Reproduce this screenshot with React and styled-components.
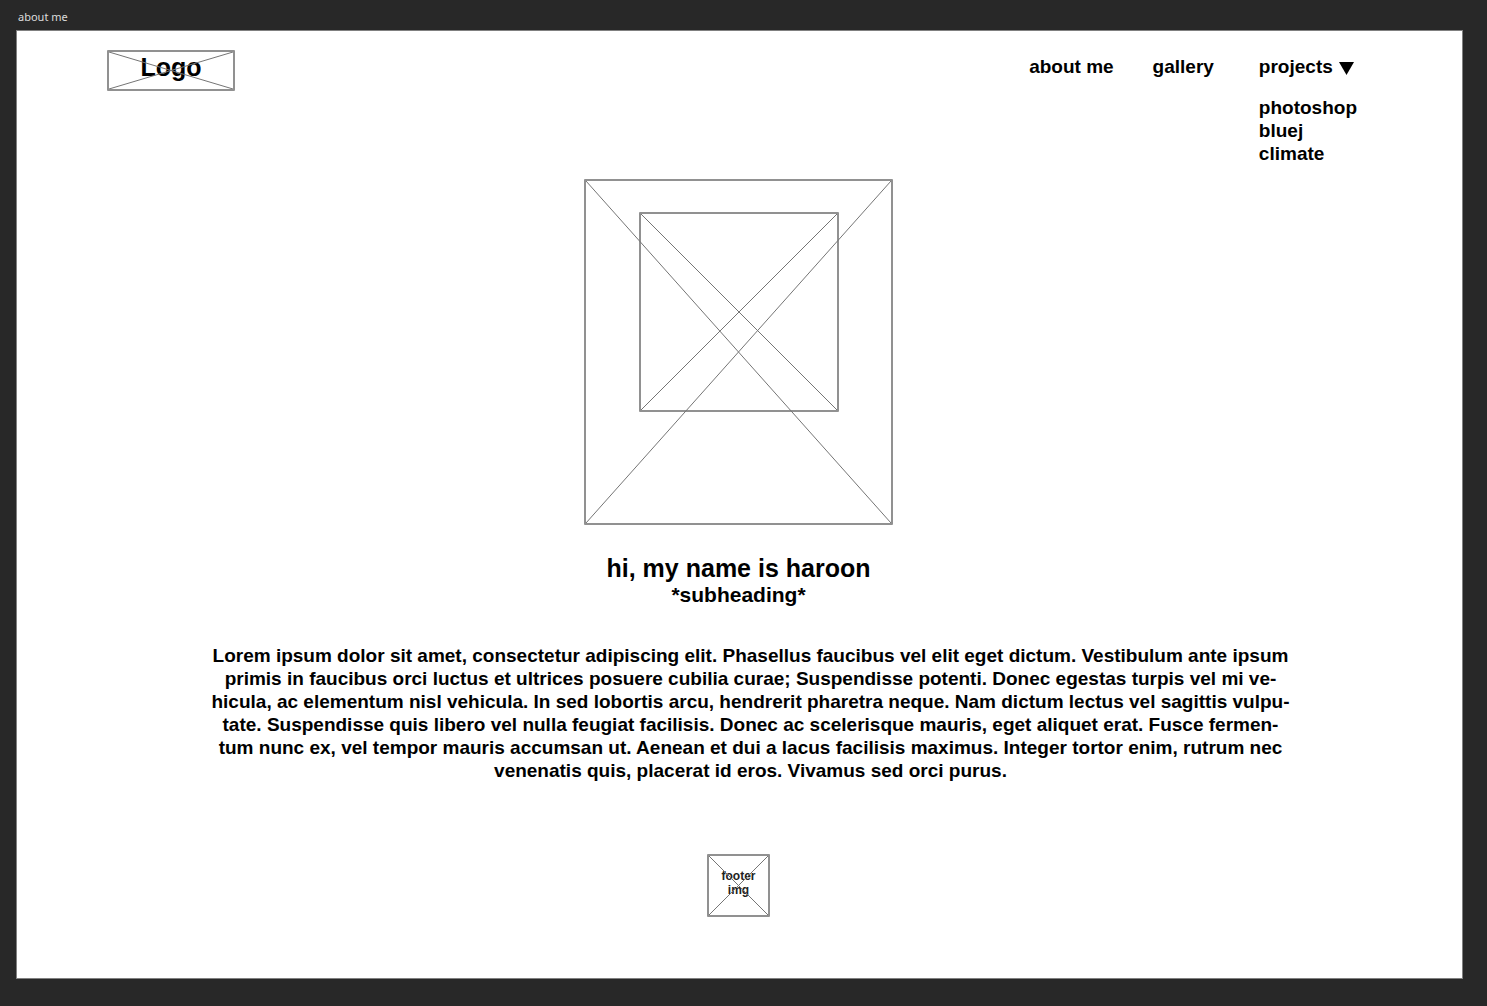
import React, { useState } from "react";
import styled, { createGlobalStyle } from "styled-components";

const GlobalStyle = createGlobalStyle`
  *, *::before, *::after { box-sizing: border-box; }
  body {
    margin: 0;
    background: #282828;
    color: #000;
    font-family: "Liberation Sans", Arial, sans-serif;
    font-weight: 700;
  }
`;

const Canvas = styled.div`
  display: flex;
  flex-direction: column;
  min-height: 100vh;
  padding: 8px 24px 27px 16px;
`;

const ArtboardLabel = styled.div`
  height: 22px;
  padding-left: 2px;
  color: #dcdcdc;
  font: 400 11px/18px "Noto Sans", sans-serif;
`;

const Artboard = styled.div`
  display: flex;
  flex: 1;
  flex-direction: column;
  background: #fff;
  border: 1px solid #808080;
`;

const Header = styled.header`
  display: flex;
  justify-content: space-between;
  align-items: flex-start;
  padding: 19px 105px 0 90px;
`;

const Frame = styled.div`
  position: relative;
  display: flex;
  justify-content: center;
  flex: none;
  width: ${(p) => p.$width}px;
  height: ${(p) => p.$height}px;
  padding-top: ${(p) => p.$top || 0}px;
  border: 2px solid #919191;
  border-radius: 1px;
`;

const Cross = styled.svg`
  position: absolute;
  inset: 0;
  width: 100%;
  height: 100%;
  stroke: #757575;
  stroke-width: 1;
  pointer-events: none;
`;

const LogoLink = styled.a`
  color: inherit;
  text-decoration: none;
`;

const LogoText = styled.span`
  font-size: 25px;
  line-height: 30px;
`;

const Nav = styled.nav`
  display: flex;
  gap: 39px;
  padding-top: 5px;
  font-size: 19px;
  line-height: 23px;
`;

const NavLink = styled.a`
  color: inherit;
  text-decoration: none;
`;

const Dropdown = styled.div`
  display: flex;
  flex-direction: column;
  gap: 18px;
  padding-left: 6px;
`;

const DropdownButton = styled.button`
  display: flex;
  align-items: center;
  gap: 6px;
  padding: 0;
  border: 0;
  background: none;
  color: inherit;
  font: inherit;
  cursor: pointer;
`;

const Arrow = styled.svg`
  width: 15px;
  height: 13px;
  margin-top: 3px;
  fill: #000;
`;

const Submenu = styled.ul`
  display: flex;
  flex-direction: column;
  margin: 0;
  padding: 0;
  list-style: none;
  visibility: ${(p) => (p.$open ? "visible" : "hidden")};
`;

const Main = styled.main`
  display: flex;
  flex-direction: column;
  align-items: center;
  padding: 14px 2px 0 0;
  text-align: center;
`;

const Title = styled.h1`
  margin: 28px 0 0;
  font-size: 25px;
  line-height: 30px;
`;

const Subtitle = styled.p`
  margin: 0;
  font-size: 21px;
  line-height: 24px;
`;

const Bio = styled.p`
  margin: 37px 0 0;
  padding-left: 24px;
  font-size: 19px;
  line-height: 23px;
`;

const Line = styled.span`
  display: block;
`;

const Footer = styled.footer`
  display: flex;
  justify-content: center;
  padding: 72px 2px 0 0;
`;

const FooterText = styled.span`
  width: 40px;
  color: #222;
  font-size: 12px;
  line-height: 14px;
  text-align: center;
`;

const bioLines = [
  "Lorem ipsum dolor sit amet, consectetur adipiscing elit. Phasellus faucibus vel elit eget dictum. Vestibulum ante ipsum",
  "primis in faucibus orci luctus et ultrices posuere cubilia curae; Suspendisse potenti. Donec egestas turpis vel mi ve-",
  "hicula, ac elementum nisl vehicula. In sed lobortis arcu, hendrerit pharetra neque. Nam dictum lectus vel sagittis vulpu-",
  "tate. Suspendisse quis libero vel nulla feugiat facilisis. Donec ac scelerisque mauris, eget aliquet erat. Fusce fermen-",
  "tum nunc ex, vel tempor mauris accumsan ut. Aenean et dui a lacus facilisis maximus. Integer tortor enim, rutrum nec",
  "venenatis quis, placerat id eros. Vivamus sed orci purus.",
];

function Placeholder({ width, height, top, children }) {
  return (
    <Frame $width={width} $height={height} $top={top}>
      {children}
      <Cross aria-hidden="true">
        <line x1="0" y1="0" x2="100%" y2="100%" />
        <line x1="100%" y1="0" x2="0" y2="100%" />
      </Cross>
    </Frame>
  );
}

export default function App() {
  const [open, setOpen] = useState(true);
  return (
    <Canvas>
      <GlobalStyle />
      <ArtboardLabel>about me</ArtboardLabel>
      <Artboard>
        <Header>
          <LogoLink href="#">
            <Placeholder width={128} height={41}>
              <LogoText>Logo</LogoText>
            </Placeholder>
          </LogoLink>
          <Nav>
            <NavLink href="#about">about me</NavLink>
            <NavLink href="#gallery">gallery</NavLink>
            <Dropdown>
              <DropdownButton type="button" aria-expanded={open} onClick={() => setOpen(!open)}>
                projects
                <Arrow viewBox="0 0 15 13" aria-hidden="true">
                  <path d="M0 0H15L7.5 13Z" />
                </Arrow>
              </DropdownButton>
              <Submenu $open={open}>
                <li><NavLink href="#photoshop">photoshop</NavLink></li>
                <li><NavLink href="#bluej">bluej</NavLink></li>
                <li><NavLink href="#climate">climate</NavLink></li>
              </Submenu>
            </Dropdown>
          </Nav>
        </Header>
        <Main>
          <Placeholder width={309} height={346} top={31}>
            <Placeholder width={200} height={200} />
          </Placeholder>
          <Title>hi, my name is haroon</Title>
          <Subtitle>*subheading*</Subtitle>
          <Bio>
            {bioLines.map((line) => (
              <Line key={line}>{line} </Line>
            ))}
          </Bio>
        </Main>
        <Footer>
          <Placeholder width={63} height={63} top={13}>
            <FooterText>footer img</FooterText>
          </Placeholder>
        </Footer>
      </Artboard>
    </Canvas>
  );
}
